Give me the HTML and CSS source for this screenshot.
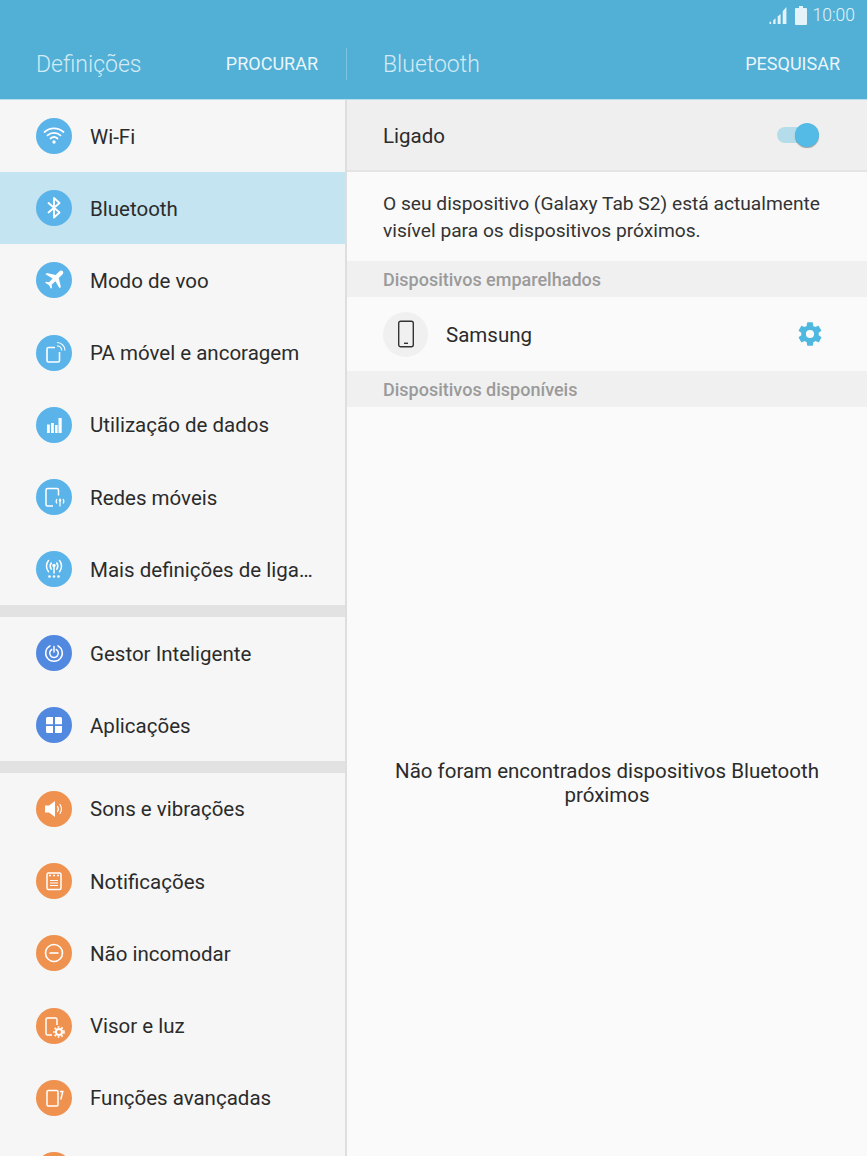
FILE: index.html
```html
<!DOCTYPE html>
<html lang="pt">
<head>
  <meta charset="UTF-8" />
  <title>Definições</title>
  <link rel="stylesheet" href="styles.css">
</head>
<body>
  <div class="screen">
    <header class="header">
      <div class="status-bar">
        <svg class="signal" width="19" height="19" viewBox="0 0 18 18"><path d="M0.500 17h1.500v-2H0.500zM4 17h2.200v-5.500L4 13.500zM8.200 17h2.800V7.500L8.200 10zM13 17h3.500V1L13 5z" fill="#e4f3f9"/></svg>
        <svg class="battery" width="12" height="19" viewBox="0 0 12 19"><path d="M4 0h4v2h3a1 1 0 0 1 1 1v15a1 1 0 0 1-1 1H1a1 1 0 0 1-1-1V3a1 1 0 0 1 1-1h3z" fill="#e4f3f9"/></svg>
        <span class="clock">10:00</span>
      </div>
      <div class="action-bar">
        <div class="action-left">
          <span class="title">Definições</span>
          <span class="action">PROCURAR</span>
        </div>
        <div class="action-right">
          <span class="title">Bluetooth</span>
          <span class="action">PESQUISAR</span>
        </div>
      </div>
    </header>

    <div class="panes">
      <nav class="sidebar">
        <div class="row">
          <span class="icon blue"><svg viewBox="0 0 36 36" fill="none" stroke="#fff" stroke-width="1.800" stroke-linecap="round"><path d="M8.500 14c5.400-4.800 13.600-4.800 19 0M11.500 17.300c3.700-3.300 9.300-3.300 13 0M14.500 20.500c2-1.700 5-1.700 7 0"/><circle cx="18" cy="24" r="1.700" fill="#fff" stroke="none"/></svg></span>
          <span class="label">Wi-Fi</span>
        </div>
        <div class="row selected">
          <span class="icon blue"><svg viewBox="0 0 36 36" fill="none" stroke="#fff" stroke-width="1.900" stroke-linejoin="round" stroke-linecap="round"><path d="M12.500 13l11 9.500-5.500 5V8l5.500 5-11 9.500"/></svg></span>
          <span class="label">Bluetooth</span>
        </div>
        <div class="row">
          <span class="icon blue"><svg viewBox="0 0 36 36"><path d="M26.800 9.200c-1-1-2.600-.8-3.600.2l-3.500 3.600-8.800-2.100-1.400 1.400 7.100 4.100-3.600 3.800-2.900-.4-1 1 3.800 2.100 2.100 3.800 1-1-.4-2.900 3.800-3.600 4.100 7.100 1.400-1.400-2.100-8.800 3.600-3.500c1-1 1.200-2.600.4-3.400z" fill="#fff"/></svg></span>
          <span class="label">Modo de voo</span>
        </div>
        <div class="row">
          <span class="icon blue"><svg viewBox="0 0 36 36" fill="none" stroke="#fff" stroke-width="1.600"><path d="M19 12.500h-6.500a1.500 1.500 0 0 0-1.500 1.500v11.500a1.500 1.500 0 0 0 1.500 1.500h9.500a1.500 1.500 0 0 0 1.500-1.500V17"/><path d="M21 7.500c4.400 0 8 3.600 8 8M21 10.800c2.600 0 4.700 2.100 4.700 4.700" stroke-width="1.200"/></svg></span>
          <span class="label">PA móvel e ancoragem</span>
        </div>
        <div class="row">
          <span class="icon blue"><svg viewBox="0 0 36 36"><path d="M11 17.500h2.800V26H11zM15 16h2.800v10H15zM19 18h2.600v8H19zM22.500 11h3.200v15h-3.200z" fill="#fff"/></svg></span>
          <span class="label">Utilização de dados</span>
        </div>
        <div class="row">
          <span class="icon blue"><svg viewBox="0 0 36 36" fill="none" stroke="#fff" stroke-width="1.500"><path d="M17 27h-5.500a1.500 1.500 0 0 1-1.500-1.500V11a1.500 1.500 0 0 1 1.500-1.500h9.500a1.500 1.500 0 0 1 1.500 1.500v5.500"/><path d="M24 19.500v8M21 20c-1 1.300-1 3.200 0 4.500M27 20c1 1.300 1 3.200 0 4.500" stroke-width="1.200"/><circle cx="24" cy="21.500" r="1.200" fill="#fff" stroke="none"/></svg></span>
          <span class="label">Redes móveis</span>
        </div>
        <div class="row">
          <span class="icon blue"><svg viewBox="0 0 36 36" fill="none" stroke="#fff" stroke-width="1.500" stroke-linecap="round"><path d="M12.500 9.500c-2.700 3.200-2.700 8 0 11.200M23.500 9.500c2.700 3.200 2.700 8 0 11.200M15.200 12c-1.300 2-1.300 4.300 0 6.200M20.800 12c1.300 2 1.300 4.300 0 6.200M18 15v7" /><circle cx="18" cy="14.500" r="1.700" fill="#fff" stroke="none"/><circle cx="13.500" cy="25.500" r="1.300" fill="#fff" stroke="none"/><circle cx="18" cy="25.500" r="1.300" fill="#fff" stroke="none"/><circle cx="22.500" cy="25.500" r="1.300" fill="#fff" stroke="none"/></svg></span>
          <span class="label">Mais definições de liga…</span>
        </div>
        <div class="divider"></div>
        <div class="row">
          <span class="icon indigo"><svg viewBox="0 0 36 36" fill="none" stroke="#fff" stroke-width="1.500" stroke-linecap="round"><path d="M14 10.800a8.300 8.300 0 1 0 8 0"/><path d="M15.800 14.500a4.300 4.300 0 1 0 4.400 0M18 11.500v5.500"/></svg></span>
          <span class="label">Gestor Inteligente</span>
        </div>
        <div class="row">
          <span class="icon indigo"><svg viewBox="0 0 36 36"><path d="M11.500 10h5.500v7.200H10v-5.700A1.500 1.500 0 0 1 11.500 10zM19 10h5.500a1.500 1.500 0 0 1 1.500 1.500v5.700h-7zM10 19h7v7h-5.500a1.500 1.500 0 0 1-1.500-1.500zM19 19h7v5.500a1.500 1.500 0 0 1-1.500 1.500H19z" fill="#fff"/></svg></span>
          <span class="label">Aplicações</span>
        </div>
        <div class="divider"></div>
        <div class="row">
          <span class="icon orange"><svg viewBox="0 0 36 36"><path d="M9 14.500h4l6-4.500v16l-6-4.500H9z" fill="#fff"/><path d="M21.500 15.500c1 1.500 1 3.500 0 5M24 13.500c1.800 2.800 1.800 6.200 0 9" fill="none" stroke="#fff" stroke-width="1.200" stroke-linecap="round"/></svg></span>
          <span class="label">Sons e vibrações</span>
        </div>
        <div class="row">
          <span class="icon orange"><svg viewBox="0 0 36 36"><rect x="11" y="10" width="14" height="16.500" rx="1.500" fill="none" stroke="#fff" stroke-width="1.500"/><path d="M13 12.500h2M17 12.500h2M21 12.500h2" stroke="#fff" stroke-width="1.600"/><path d="M14 17.500h8M14 20h8M14 22.500h8" stroke="#fff" stroke-width="1.200"/></svg></span>
          <span class="label">Notificações</span>
        </div>
        <div class="row">
          <span class="icon orange"><svg viewBox="0 0 36 36" fill="none" stroke="#fff" stroke-width="1.600"><circle cx="18" cy="18" r="8.500"/><path d="M13.500 18h9"/></svg></span>
          <span class="label">Não incomodar</span>
        </div>
        <div class="row">
          <span class="icon orange"><svg viewBox="0 0 36 36"><path d="M16 27h-4.500a1.500 1.500 0 0 1-1.500-1.500V11.500a1.500 1.500 0 0 1 1.500-1.500h8a1.500 1.500 0 0 1 1.500 1.500V17" fill="none" stroke="#fff" stroke-width="1.500"/><circle cx="23" cy="24" r="3" fill="none" stroke="#fff" stroke-width="2"/><circle cx="23" cy="24" r="5" fill="none" stroke="#fff" stroke-width="1.600" stroke-dasharray="1.800 1.800"/></svg></span>
          <span class="label">Visor e luz</span>
        </div>
        <div class="row">
          <span class="icon orange"><svg viewBox="0 0 36 36" fill="none" stroke="#fff" stroke-width="1.500"><rect x="11" y="10.500" width="11" height="15.500" rx="1.200"/><path d="M24 11.500h2.800L24.800 19.500"/></svg></span>
          <span class="label">Funções avançadas</span>
        </div>
        <div class="row">
          <span class="icon orange"></span>
          <span class="label"></span>
        </div>
      </nav>

      <main class="detail">
        <div class="switch-row">
          <span class="label">Ligado</span>
          <span class="switch"><span class="knob"></span></span>
        </div>
        <p class="note">O seu dispositivo (Galaxy Tab S2) está actualmente visível para os dispositivos próximos.</p>
        <div class="section">Dispositivos emparelhados</div>
        <div class="device">
          <span class="device-icon"><svg width="18" height="28" viewBox="0 0 18 28" fill="none" stroke="#333" stroke-width="1.400"><rect x="1.700" y="1.200" width="14.600" height="25.600" rx="2"/><path d="M7 23.300h4"/></svg></span>
          <span class="label">Samsung</span>
          <svg class="gear" width="28" height="28" viewBox="0 0 24 24"><path d="M19.400 13c.05-.33.1-.66.1-1s-.05-.67-.1-1l2.100-1.650c.2-.15.25-.42.1-.64l-2-3.460c-.12-.22-.4-.3-.6-.22l-2.500 1c-.52-.4-1.080-.73-1.700-.98l-.37-2.650A.5.500 0 0 0 14 2h-4a.5.500 0 0 0-.5.420l-.37 2.650c-.62.25-1.180.58-1.700.98l-2.500-1c-.22-.08-.48 0-.6.220l-2 3.460c-.13.220-.07.490.1.640L4.570 11c-.04.330-.07.660-.07 1s.03.670.07 1l-2.100 1.650c-.2.150-.25.420-.1.640l2 3.460c.12.220.38.300.6.220l2.500-1c.52.400 1.080.730 1.700.980l.37 2.650c.05.240.26.420.5.420h4c.25 0 .460-.180.500-.420l.37-2.650c.62-.250 1.180-.580 1.700-.980l2.500 1c.22.080.480 0 .6-.220l2-3.460c.12-.220.070-.490-.1-.640zM12 15.500a3.500 3.500 0 1 1 0-7 3.500 3.500 0 0 1 0 7z" fill="#4fb8e0"/></svg>
        </div>
        <div class="section">Dispositivos disponíveis</div>
        <div class="empty">Não foram encontrados dispositivos Bluetooth próximos</div>
      </main>
    </div>
  </div>
</body>
</html>
```

FILE: styles.css
```css
* {
  box-sizing: border-box;
  margin: 0;
  padding: 0;
}

body {
  font-family: Roboto, sans-serif;
  color: #2b2b2b;
  background: #fafafa;
  overflow: hidden;
}

.screen {
  width: 867px;
  height: 1156px;
  display: flex;
  flex-direction: column;
  overflow: hidden;
}

/* header */
.header {
  height: 100px;
  flex-shrink: 0;
  background: #52afd5;
  border-bottom: 1px solid #b6dfef;
  color: #e4f3f9;
}

.status-bar {
  height: 28px;
  display: flex;
  justify-content: flex-end;
  align-items: center;
  gap: 7px;
  padding-right: 12px;
  padding-top: 2px;
}

.clock {
  font-size: 17.500px;
  font-weight: 300;
  margin-left: -2px;
}

.action-bar {
  height: 71px;
  display: flex;
  align-items: center;
}

.action-left,
.action-right {
  display: flex;
  justify-content: space-between;
  align-items: center;
}

.action-left {
  width: 347px;
  height: 32px;
  padding: 0 28px 0 36px;
  border-right: 1px solid #7cc3df;
}

.action-right {
  flex: 1;
  padding: 0 27px 0 36px;
}

.title {
  font-size: 23px;
  font-weight: 300;
  color: #d3ebf5;
  padding-top: 1px;
}

.action {
  font-size: 18px;
  color: #eaf6fb;
}

/* panes */
.panes {
  flex: 1;
  display: flex;
  min-height: 0;
}

.sidebar {
  width: 347px;
  flex-shrink: 0;
  background: #f6f6f6;
  border-right: 2px solid #dedede;
}

.row {
  height: 72.200px;
  display: flex;
  align-items: center;
  gap: 18px;
  padding-left: 36px;
}

.row.selected {
  background: #c3e4f0;
}

.divider {
  height: 11.600px;
  background: #e2e2e2;
}

.icon {
  width: 36px;
  height: 36px;
  border-radius: 50%;
  flex-shrink: 0;
}

.icon svg {
  display: block;
  width: 36px;
  height: 36px;
}

.icon.blue { background: #5ab3e9; }
.icon.indigo { background: #5189e0; }
.icon.orange { background: #ef914f; }

.label {
  font-size: 20.500px;
  white-space: nowrap;
  padding-top: 1px;
}

/* right side */
.detail {
  flex: 1;
  display: flex;
  flex-direction: column;
  min-width: 0;
}

.switch-row {
  height: 72px;
  flex-shrink: 0;
  display: flex;
  justify-content: space-between;
  align-items: center;
  padding: 0 51px 0 36px;
  background: #efefef;
  border-bottom: 2px solid #e4e4e4;
}

.switch {
  position: relative;
  width: 39px;
  height: 16px;
  border-radius: 8px;
  background: #b4dcea;
}

.knob {
  position: absolute;
  top: -4px;
  right: -3px;
  width: 24px;
  height: 24px;
  border-radius: 50%;
  background: #53bbe6;
  box-shadow: 0 1px 1px rgba(0, 0, 0, 0.35);
}

.note {
  height: 89px;
  flex-shrink: 0;
  padding: 18px 36px 0;
  font-size: 19.200px;
  line-height: 27px;
  color: #333;
}

.section {
  height: 36px;
  flex-shrink: 0;
  display: flex;
  align-items: center;
  padding-left: 36px;
  background: #f0f0f0;
  color: #9a9a9a;
  font-size: 18px;
  font-weight: 500;
}

.device {
  height: 74px;
  flex-shrink: 0;
  display: flex;
  align-items: center;
  gap: 18px;
  padding: 0 43px 0 36px;
}

.device-icon {
  width: 45px;
  height: 45px;
  border-radius: 50%;
  background: #f0f0f0;
  display: flex;
  justify-content: center;
  align-items: center;
}

.gear {
  margin-left: auto;
}

.empty {
  flex: 1;
  display: flex;
  align-items: center;
  justify-content: center;
  text-align: center;
  padding: 2px 36px 0;
  font-size: 20.500px;
  line-height: 24px;
}
```
